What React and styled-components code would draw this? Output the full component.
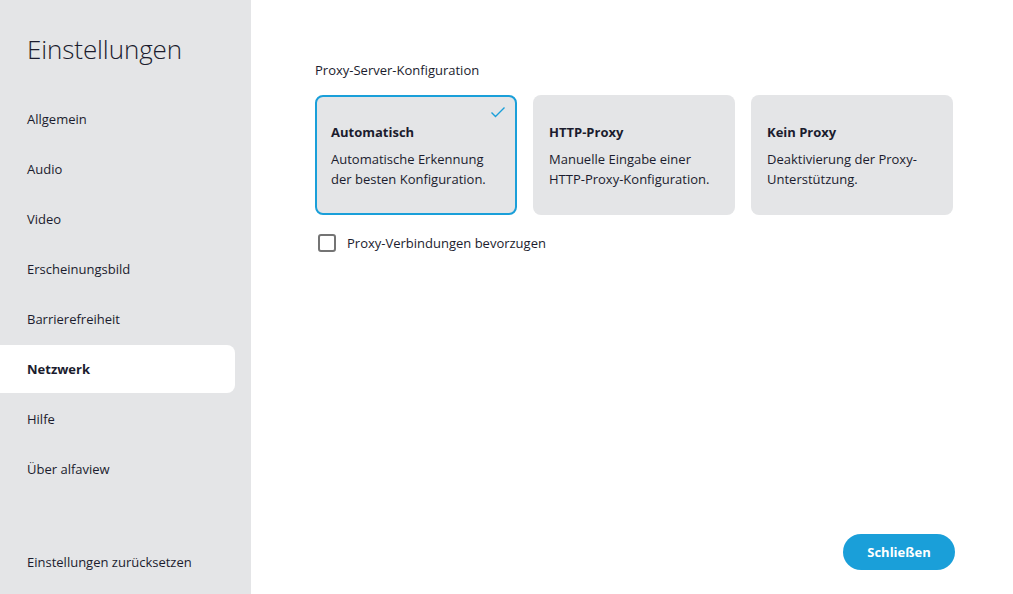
import React, { useState } from "react";
import styled, { createGlobalStyle } from "styled-components";

const GlobalStyle = createGlobalStyle`
  html, body {
    margin: 0;
    padding: 0;
    height: 100%;
  }
  body {
    font-family: "Open Sans", "Noto Sans", sans-serif;
    color: #1b1c2e;
    background: #fff;
  }
  #root {
    height: 100%;
  }
`;

const Page = styled.div`
  display: flex;
  width: 100vw;
  height: 100vh;
  overflow: hidden;
`;

const Sidebar = styled.nav`
  width: 251px;
  flex-shrink: 0;
  background: #e4e5e7;
  display: flex;
  flex-direction: column;
  padding: 31px 16px 8px 0;
  box-sizing: border-box;
`;

const Title = styled.h1`
  margin: 0 0 28px 27px;
  font-size: 26px;
  font-weight: 300;
  line-height: 36px;
  letter-spacing: -0.1px;
`;

const NavList = styled.div`
  display: flex;
  flex-direction: column;
  gap: 2px;
`;

const NavItem = styled.div`
  height: 48px;
  display: flex;
  align-items: center;
  padding-left: 27px;
  font-size: 13px;
  font-weight: ${(p) => (p.$active ? 700 : 400)};
  background: ${(p) => (p.$active ? "#fff" : "transparent")};
  border-radius: 0 8px 8px 0;
  cursor: pointer;
`;

const SidebarFooter = styled(NavItem)`
  margin-top: auto;
`;

const Main = styled.main`
  flex: 1;
  display: flex;
  flex-direction: column;
  padding: 60px 58px 24px 64px;
`;

const SectionLabel = styled.div`
  font-size: 13px;
  line-height: 20px;
  margin-bottom: 15px;
`;

const Cards = styled.div`
  display: flex;
  gap: 16px;
`;

const Card = styled.div`
  position: relative;
  width: 202px;
  height: 120px;
  box-sizing: border-box;
  background: #e4e5e7;
  border-radius: 8px;
  border: 2px solid ${(p) => (p.$selected ? "#1a9fd9" : "transparent")};
  padding: 25px 14px 0 14px;
  cursor: pointer;
`;

const CardTitle = styled.div`
  font-size: 13px;
  font-weight: 700;
  line-height: 20px;
  margin-bottom: 7px;
`;

const CardText = styled.div`
  font-size: 13px;
  line-height: 20px;
`;

const Check = styled.svg`
  position: absolute;
  top: 9px;
  right: 9px;
`;

const CheckRow = styled.label`
  display: flex;
  align-items: center;
  gap: 11px;
  margin-top: 19px;
  margin-left: 3px;
  font-size: 13px;
  cursor: pointer;
`;

const Box = styled.span`
  width: 18px;
  height: 18px;
  box-sizing: border-box;
  border: 2px solid #747474;
  border-radius: 3px;
  background: #fff;
`;

const Footer = styled.div`
  margin-top: auto;
  display: flex;
  justify-content: flex-end;
`;

const Button = styled.button`
  width: 112px;
  height: 36px;
  border: none;
  border-radius: 18px;
  background: #1a9fd9;
  color: #fff;
  font-family: inherit;
  font-size: 13px;
  font-weight: 700;
  cursor: pointer;
`;

const navItems = [
  "Allgemein",
  "Audio",
  "Video",
  "Erscheinungsbild",
  "Barrierefreiheit",
  "Netzwerk",
  "Hilfe",
  "Über alfaview",
];

const options = [
  {
    id: "auto",
    title: "Automatisch",
    text: ["Automatische Erkennung", "der besten Konfiguration."],
  },
  {
    id: "http",
    title: "HTTP-Proxy",
    text: ["Manuelle Eingabe einer", "HTTP-Proxy-Konfiguration."],
  },
  {
    id: "none",
    title: "Kein Proxy",
    text: ["Deaktivierung der Proxy-", "Unterstützung."],
  },
];

export default function App() {
  const [selected, setSelected] = useState("auto");
  return (
    <Page>
      <GlobalStyle />
      <Sidebar>
        <Title>Einstellungen</Title>
        <NavList>
          {navItems.map((item) => (
            <NavItem key={item} $active={item === "Netzwerk"}>
              {item}
            </NavItem>
          ))}
        </NavList>
        <SidebarFooter>Einstellungen zurücksetzen</SidebarFooter>
      </Sidebar>
      <Main>
        <SectionLabel>Proxy-Server-Konfiguration</SectionLabel>
        <Cards>
          {options.map((o) => (
            <Card
              key={o.id}
              $selected={selected === o.id}
              onClick={() => setSelected(o.id)}
            >
              {selected === o.id && (
                <Check width="16" height="12" viewBox="0 0 16 12">
                  <path
                    d="M1.5 6.5 L5.5 10.5 L14.5 1.5"
                    fill="none"
                    stroke="#1a9fd9"
                    strokeWidth="1.4"
                  />
                </Check>
              )}
              <CardTitle>{o.title}</CardTitle>
              <CardText>
                {o.text[0]}
                <br />
                {o.text[1]}
              </CardText>
            </Card>
          ))}
        </Cards>
        <CheckRow>
          <Box />
          Proxy-Verbindungen bevorzugen
        </CheckRow>
        <Footer>
          <Button>Schließen</Button>
        </Footer>
      </Main>
    </Page>
  );
}
